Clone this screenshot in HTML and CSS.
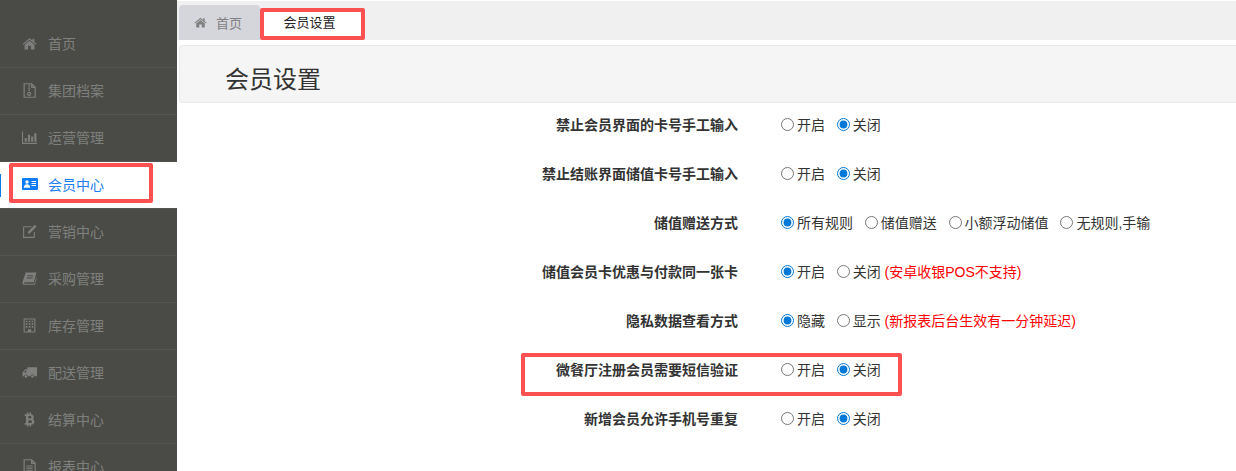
FILE: index.html
```html
<!DOCTYPE html>
<html lang="zh-CN">
<head>
    <meta charset="UTF-8">
    <meta name="viewport" content="width=device-width, initial-scale=1.0">
    <title>会员设置</title>
    <link rel="stylesheet" href="styles.css">
</head>
<body>
    <div class="layout">
        <!-- Sidebar -->
        <div class="sidebar">
            <a class="nav-item">
                <svg class="nav-icon" viewBox="0 0 14 14"><path d="M7 2 L0.5 7.4 L1.2 8.2 L7 3.4 L12.8 8.2 L13.5 7.4 L11.5 5.7 V2.5 H9.8 V4.3 Z M7 4.4 L2.4 8.2 V12.5 H5.7 V9.2 H8.3 V12.5 H11.6 V8.2 Z"/></svg>
                <span>首页</span>
            </a>
            <a class="nav-item">
                <svg class="nav-icon nav-icon-line" viewBox="0 0 14 14"><path d="M2 .7 H9 L12.3 4 V13.3 H2 Z M9 .7 V4 H12.3"/><path d="M6 2 H7.4 M6 3.6 H7.4 M6 5.2 H7.4 M6 6.8 H7.4"/><circle cx="6.7" cy="10.2" r="1.4"/></svg>
                <span>集团档案</span>
            </a>
            <a class="nav-item">
                <svg class="nav-icon" viewBox="0 0 14 14"><path d="M0 1.5 H1 V12 H15 V13 H0 Z M2.5 7.5 H4.5 V11 H2.5 Z M5.5 4.5 H7.5 V11 H5.5 Z M8.5 6 H10.500 V11 H8.500 Z M11.500 3 H13.500 V11 H11.500 Z"/></svg>
                <span>运营管理</span>
            </a>
            <a class="nav-item active">
                <svg class="nav-icon nav-icon-wide" viewBox="0 0 16 12"><path fill-rule="evenodd" d="M1 0 H15 A1 1 0 0 1 16 1 V11 A1 1 0 0 1 15 12 H1 A1 1 0 0 1 0 11 V1 A1 1 0 0 1 1 0 Z M5 2.300 A1.700 1.700 0 1 0 5 5.700 A1.700 1.700 0 1 0 5 2.300 Z M1.800 9.800 H8.200 C8.200 7.600 7 6.300 5 6.300 C3 6.300 1.800 7.600 1.800 9.800 Z M9.500 3 V4 H14 V3 Z M9.500 5 V6 H14 V5 Z M9.500 7 V8 H14 V7 Z"/></svg>
                <span>会员中心</span>
            </a>
            <a class="nav-item">
                <svg class="nav-icon" viewBox="0 0 14 14"><path d="M1.500 2 H9 V3 H2 V12 H11 V7.500 H12 V13 H1 V2.500 Z M12 .8 L13.600 2.400 L7.500 8.600 L5.300 9.100 L5.800 6.900 Z"/></svg>
                <span>营销中心</span>
            </a>
            <a class="nav-item">
                <svg class="nav-icon" viewBox="0 0 14 14"><path d="M3.500 1.500 H13.500 L11 10.500 H2.500 C1.800 10.500 1.800 11.800 2.500 11.800 H11.500 L13.300 6 L13.800 6.500 L12 12.800 H2 C.5 12.800 .2 11.300 .6 10 Z M5 4 V5 H10.500 V4 Z M4.500 6 V7 H10 V6 Z" fill-rule="evenodd"/></svg>
                <span>采购管理</span>
            </a>
            <a class="nav-item">
                <svg class="nav-icon" viewBox="0 0 14 14"><path fill-rule="evenodd" d="M1.500 .5 H12.500 V13.500 H1.500 Z M2.500 1.500 V12.500 H5.500 V10.500 H8.500 V12.500 H11.500 V1.500 Z M3.500 2.500 H5 V4 H3.500 Z M6.300 2.500 H7.800 V4 H6.300 Z M9 2.500 H10.500 V4 H9 Z M3.500 5 H5 V6.500 H3.500 Z M6.300 5 H7.800 V6.500 H6.300 Z M9 5 H10.500 V6.500 H9 Z M3.500 7.500 H5 V9 H3.500 Z M6.300 7.500 H7.800 V9 H6.300 Z M9 7.500 H10.500 V9 H9 Z"/></svg>
                <span>库存管理</span>
            </a>
            <a class="nav-item">
                <svg class="nav-icon" viewBox="0 0 14 14"><path fill-rule="evenodd" d="M5 2 H14 V10.500 H11.500 A1.700 1.700 0 0 0 8 10.500 H5.500 A1.700 1.700 0 0 0 2 10.500 H.5 V7 L3 4 H5 Z M3.500 5 L1.800 7 H4 V5 Z M3.700 9.500 A1.200 1.200 0 1 0 3.700 11.900 A1.200 1.200 0 1 0 3.700 9.500 Z M9.700 9.500 A1.200 1.200 0 1 0 9.700 11.900 A1.200 1.200 0 1 0 9.700 9.500 Z"/></svg>
                <span>配送管理</span>
            </a>
            <a class="nav-item">
                <svg class="nav-icon" viewBox="0 0 14 14"><path fill-rule="evenodd" d="M2.500 2 H4.500 V.5 H6 V2 H7 V.5 H8.500 V2.200 C10.500 2.600 11 4 11 4.800 C11 5.700 10.600 6.300 9.900 6.700 C11 7 11.500 8 11.500 9 C11.500 10.500 10.400 11.600 8.500 11.800 V13.500 H7 V12 H6 V13.500 H4.500 V12 H2.500 V10.300 H3.700 V3.700 H2.500 Z M6 3.800 V6 H7.500 C8.400 6 8.800 5.500 8.800 4.900 C8.800 4.300 8.400 3.800 7.500 3.800 Z M6 7.700 V10.200 H7.800 C8.800 10.200 9.300 9.600 9.300 9 C9.300 8.300 8.800 7.700 7.800 7.700 Z"/></svg>
                <span>结算中心</span>
            </a>
            <a class="nav-item">
                <svg class="nav-icon nav-icon-line" viewBox="0 0 14 14"><path d="M2 .7 H9 L12.300 4 V13.300 H2 Z M9 .7 V4 H12.300"/><path d="M4 6.500 H10 M4 8.500 H10 M4 10.500 H10"/></svg>
                <span>报表中心</span>
            </a>
        </div>

        <div class="main">
            <!-- Tabs -->
            <div class="tabs">
                <div class="tab tab-home">
                    <svg class="tab-icon" viewBox="0 0 14 14"><path d="M7 2 L0.500 7.400 L1.200 8.200 L7 3.400 L12.800 8.200 L13.500 7.400 L11.500 5.700 V2.500 H9.800 V4.300 Z M7 4.400 L2.400 8.200 V12.500 H5.700 V9.200 H8.300 V12.500 H11.600 V8.200 Z"/></svg>
                    <span>首页</span>
                </div>
                <div class="tab tab-current">会员设置</div>
            </div>

            <div class="page-header">
                <h1>会员设置</h1>
            </div>

            <!-- Settings form -->
            <form class="settings">
                <div class="form-row">
                    <label class="form-label">禁止会员界面的卡号手工输入</label>
                    <div class="form-options">
                        <label class="radio"><input type="radio" name="a">开启</label>
                        <label class="radio"><input type="radio" name="a" checked>关闭</label>
                    </div>
                </div>
                <div class="form-row">
                    <label class="form-label">禁止结账界面储值卡号手工输入</label>
                    <div class="form-options">
                        <label class="radio"><input type="radio" name="b">开启</label>
                        <label class="radio"><input type="radio" name="b" checked>关闭</label>
                    </div>
                </div>
                <div class="form-row">
                    <label class="form-label">储值赠送方式</label>
                    <div class="form-options">
                        <label class="radio"><input type="radio" name="c" checked>所有规则</label>
                        <label class="radio"><input type="radio" name="c">储值赠送</label>
                        <label class="radio"><input type="radio" name="c">小额浮动储值</label>
                        <label class="radio"><input type="radio" name="c">无规则,手输</label>
                    </div>
                </div>
                <div class="form-row">
                    <label class="form-label">储值会员卡优惠与付款同一张卡</label>
                    <div class="form-options">
                        <label class="radio"><input type="radio" name="d" checked>开启</label>
                        <label class="radio"><input type="radio" name="d">关闭</label>
                        <span class="note">(安卓收银POS不支持)</span>
                    </div>
                </div>
                <div class="form-row">
                    <label class="form-label">隐私数据查看方式</label>
                    <div class="form-options">
                        <label class="radio"><input type="radio" name="e" checked>隐藏</label>
                        <label class="radio"><input type="radio" name="e">显示</label>
                        <span class="note">(新报表后台生效有一分钟延迟)</span>
                    </div>
                </div>
                <div class="form-row">
                    <label class="form-label">微餐厅注册会员需要短信验证</label>
                    <div class="form-options">
                        <label class="radio"><input type="radio" name="f">开启</label>
                        <label class="radio"><input type="radio" name="f" checked>关闭</label>
                    </div>
                </div>
                <div class="form-row">
                    <label class="form-label">新增会员允许手机号重复</label>
                    <div class="form-options">
                        <label class="radio"><input type="radio" name="g">开启</label>
                        <label class="radio"><input type="radio" name="g" checked>关闭</label>
                    </div>
                </div>
            </form>
        </div>
    </div>

    <!-- Red annotation boxes drawn over the screenshot -->
    <div class="mark mark-nav"></div>
    <div class="mark mark-tab"></div>
    <div class="mark mark-row"></div>
</body>
</html>
```

FILE: styles.css
```css
html, body {
    height: 100%;
}

body {
    margin: 0;
    padding: 0;
    background: #fff;
    color: #333;
    font-family: "Liberation Sans", "Noto Sans CJK SC", sans-serif;
    font-size: 14px;
    overflow: hidden;
}

.layout {
    display: flex;
    height: 471px;
    overflow: hidden;
}

/* Sidebar */
.sidebar {
    width: 177px;
    flex-shrink: 0;
    padding-top: 21px;
    background: #4a4b47;
    box-sizing: border-box;
}

.nav-item {
    display: flex;
    align-items: center;
    height: 47px;
    padding: 0 0 2px 22px;
    box-sizing: border-box;
    border-bottom: 1px solid #545551;
    color: #7f807e;
}

.nav-item.active {
    position: relative;
    background: #fff;
    background-clip: padding-box;
    color: #1a7ef0;
}

.nav-item.active::before {
    content: "";
    position: absolute;
    left: 0;
    top: 12px;
    width: 1px;
    height: 23px;
    background: #0b7cf0;
}

.nav-icon {
    width: 15px;
    height: 15px;
    margin-right: 11px;
    flex-shrink: 0;
    fill: currentColor;
}

.nav-icon-wide {
    width: 16px;
    height: 12px;
    margin-right: 10px;
    fill: #0f7cf5;
}

.nav-icon-line {
    fill: none;
    stroke: currentColor;
    stroke-width: 1.1;
}

/* Tabs */
.main {
    flex: 1;
    min-width: 0;
}

.tabs {
    display: flex;
    align-items: flex-end;
    height: 39px;
    margin-top: 1px;
    padding-left: 2px;
    background: #f0f0f0;
}

.tab {
    display: flex;
    align-items: center;
    height: 35px;
    box-sizing: border-box;
    font-size: 13px;
}

.tab-home {
    width: 81px;
    padding-left: 15px;
    background: #d5d6dc;
    border-radius: 4px 4px 0 0;
    color: #808080;
}

.tab-icon {
    width: 13px;
    height: 13px;
    margin-right: 9px;
    fill: #808080;
}

.tab-current {
    justify-content: center;
    width: 103px;
    height: 32px;
    padding: 0 4px 5px 0;
    background: #fff;
    color: #222;
}

.page-header {
    height: 58px;
    margin: 5px 0 0 2px;
    padding-left: 45px;
    box-sizing: border-box;
    background: #f5f5f5;
    border: 1px solid #e9e9e9;
    border-width: 1px 0 1px 1px;
    border-radius: 4px 0 0 4px;
}

.page-header h1 {
    margin: 0;
    font-size: 24px;
    font-weight: 400;
    line-height: 68px;
    color: #333;
}

/* Settings form */
.settings {
    display: flex;
    flex-direction: column;
    gap: 29px;
    padding-top: 11px;
}

.form-row {
    display: grid;
    grid-template-columns: 561px 1fr;
    column-gap: 43px;
    align-items: center;
    height: 20px;
}

.form-label {
    text-align: right;
    font-weight: 700;
    font-size: 14px;
    white-space: nowrap;
}

.form-options {
    display: flex;
    align-items: center;
    gap: 11.8px;
}

.radio {
    display: flex;
    align-items: center;
    font-size: 14px;
    white-space: nowrap;
}

.radio input {
    width: 13px;
    height: 13px;
    margin: 0 3px 0 0;
    accent-color: #0078d7;
}

.note {
    margin-left: -8px;
    color: #f00;
    font-size: 14px;
    white-space: nowrap;
}

/* Annotation boxes */
.mark {
    position: absolute;
    box-sizing: border-box;
    border: 4px solid #fc5151;
    border-radius: 2px;
}

.mark-nav {
    left: 9px;
    top: 163px;
    width: 144px;
    height: 40px;
}

.mark-tab {
    left: 260px;
    top: 8px;
    width: 105px;
    height: 32px;
}

.mark-row {
    left: 521px;
    top: 353px;
    width: 381px;
    height: 43px;
}
```
